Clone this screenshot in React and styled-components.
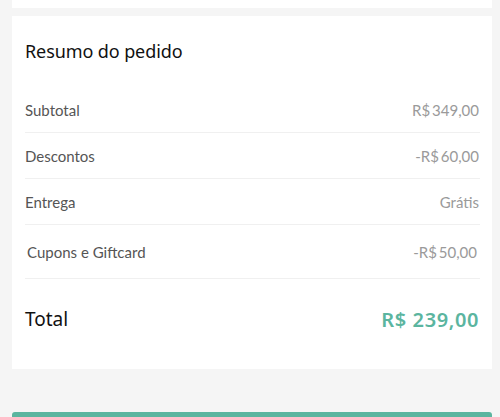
import styled, { createGlobalStyle } from "styled-components";

const GlobalStyle = createGlobalStyle`
  html, body {
    margin: 0;
    padding: 0;
    background: #f5f5f5;
  }
  * {
    box-sizing: border-box;
  }
`;

const Page = styled.div`
  width: 500px;
  height: 417px;
  overflow: hidden;
  padding: 0 8px 0 12px;
  display: flex;
  flex-direction: column;
  > * {
    flex-shrink: 0;
  }
`;

const TopCard = styled.div`
  height: 8px;
  background: #fff;
`;

const Card = styled.section`
  margin-top: 8px;
  background: #fff;
  padding: 23px 12px 0 13px;
  height: 353px;
`;

const Title = styled.h2`
  margin: 0 0 24px 0;
  font-family: "Noto Sans", "Open Sans", sans-serif;
  font-weight: 400;
  font-size: 18px;
  color: #111;
  letter-spacing: -0.1px;
`;

const Row = styled.div`
  display: flex;
  justify-content: space-between;
  align-items: center;
  height: ${(p) => p.h || 46}px;
  border-bottom: 1px solid #f0f0f0;
  padding: ${(p) => (p.indent ? "0 3px 0 2px" : "0 1px 0 0")};
  font-family: "Lato", sans-serif;
  font-size: 15px;
`;

const Label = styled.span`
  color: #555;
`;

const Value = styled.span`
  color: #9a9a9a;
`;

const TotalRow = styled.div`
  display: flex;
  justify-content: space-between;
  align-items: center;
  height: 80px;
  font-family: "Noto Sans", "Open Sans", sans-serif;
  font-size: 19px;
`;

const TotalLabel = styled.span`
  color: #111;
`;

const TotalValue = styled.span`
  color: #5bb59f;
  font-weight: 600;
  font-size: 20px;
  letter-spacing: 0.6px;
  padding-right: 1px;
`;

const Button = styled.div`
  margin-top: 43px;
  height: 10px;
  background: #5bb59f;
  border-radius: 3px 3px 0 0;
`;

export default function App() {
  const rows = [
    ["Subtotal", "R$\u2009349,00"],
    ["Descontos", "-R$\u200960,00"],
    ["Entrega", "Grátis"],
  ];
  return (
    <>
      <GlobalStyle />
      <Page>
        <TopCard />
        <Card>
          <Title>Resumo do pedido</Title>
          {rows.map(([label, value]) => (
            <Row key={label}>
              <Label>{label}</Label>
              <Value>{value}</Value>
            </Row>
          ))}
          <Row indent h={54}>
            <Label>Cupons e Giftcard</Label>
            <Value>{"-R$\u200950,00"}</Value>
          </Row>
          <TotalRow>
            <TotalLabel>Total</TotalLabel>
            <TotalValue>R$ 239,00</TotalValue>
          </TotalRow>
        </Card>
        <Button />
      </Page>
    </>
  );
}
